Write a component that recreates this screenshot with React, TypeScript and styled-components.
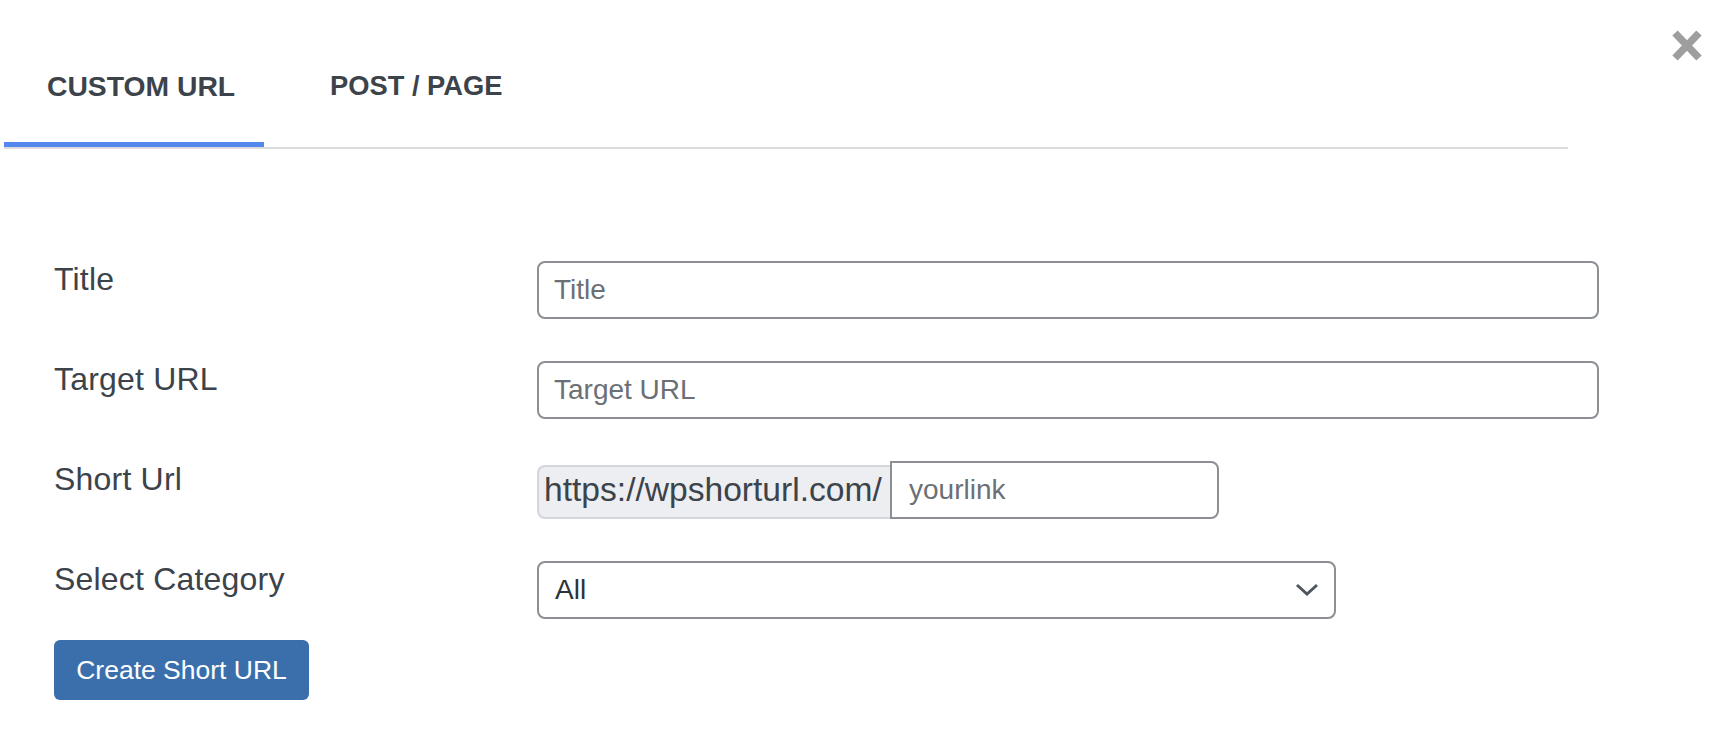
import React from "react";
import styled, { createGlobalStyle } from "styled-components";

const GlobalStyle = createGlobalStyle`
  html, body {
    margin: 0;
    padding: 0;
    background: #ffffff;
    font-family: "Liberation Sans", Arial, sans-serif;
  }
  * { box-sizing: border-box; }
`;

const Page = styled.div`
  position: relative;
  width: 1722px;
  height: 754px;
  background: #ffffff;
  overflow: hidden;
`;

const CloseButton = styled.button`
  position: absolute;
  top: 30px;
  right: 20px;
  width: 30px;
  height: 31px;
  padding: 0;
  border: 0;
  background: transparent;
  cursor: pointer;
  display: flex;
  align-items: center;
  justify-content: center;
`;

const TabBar = styled.div`
  display: flex;
  margin-left: 4px;
  width: 1564px;
  border-bottom: 2px solid #dcdcde;
`;

const Tab = styled.div<{ $active?: boolean; $width?: number; $pad: number; $size: number }>`
  width: ${(p) => (p.$width ? `${p.$width}px` : "auto")};
  padding: 69px 0 39px ${(p) => p.$pad}px;
  font-size: ${(p) => p.$size}px;
  line-height: 34px;
  font-weight: 700;
  color: #3c434a;
  white-space: nowrap;
  border-bottom: 5px solid ${(p) => (p.$active ? "#5588ee" : "transparent")};
  cursor: pointer;
`;

const Form = styled.div`
  display: flex;
  flex-direction: column;
  align-items: flex-start;
  padding: 112px 0 0 54px;
`;

const Fields = styled.div`
  display: flex;
  flex-direction: column;
  gap: 42px;
`;

const FieldRow = styled.div`
  display: grid;
  grid-template-columns: 483px 1062px;
  height: 58px;
`;

const Label = styled.label`
  padding-top: 0;
  font-size: 32px;
  line-height: 36px;
  letter-spacing: 0.2px;
  color: #3c434a;
`;

const TextInput = styled.input<{ $width?: number }>`
  width: ${(p) => (p.$width ? `${p.$width}px` : "100%")};
  height: 58px;
  padding: 0 15px;
  border: 2px solid #8c8f94;
  border-radius: 8px;
  background: #ffffff;
  font-family: "Liberation Sans", Arial, sans-serif;
  font-size: 28px;
  color: #2c3338;
  outline: none;
  &::placeholder {
    color: #6b6f76;
  }
`;

const Group = styled.div`
  display: flex;
  align-items: flex-end;
  height: 58px;
`;

const Prefix = styled.span`
  display: flex;
  align-items: center;
  width: 353px;
  height: 54px;
  padding: 0 0 4px 5px;
  background: #eceef1;
  border: 2px solid #d3d6da;
  border-right: 0;
  border-radius: 8px 0 0 8px;
  font-size: 33.6px;
  color: #3c434a;
  white-space: nowrap;
`;

const GroupInput = styled(TextInput)`
  padding: 0 17px;
  border-radius: 0 8px 8px 0;
`;

const SelectBox = styled.div`
  display: flex;
  align-items: center;
  justify-content: space-between;
  width: 799px;
  height: 58px;
  padding: 0 15px 0 16px;
  border: 2px solid #8c8f94;
  border-radius: 8px;
  font-size: 28px;
  color: #2c3338;
  cursor: pointer;
`;

const PrimaryButton = styled.button`
  margin-top: 21px;
  width: 255px;
  height: 60px;
  padding: 0;
  border: 0;
  border-radius: 6px;
  background: #3a6fab;
  color: #ffffff;
  font-family: "Liberation Sans", Arial, sans-serif;
  font-size: 26.5px;
  cursor: pointer;
`;

export default function App() {
  return (
    <>
      <GlobalStyle />
      <Page>
        <CloseButton aria-label="Close">
          <svg width="30" height="31" viewBox="0 0 30 31">
            <line x1="3" y1="3" x2="27" y2="28" stroke="#9e9e9e" strokeWidth="7.5" />
            <line x1="27" y1="3" x2="3" y2="28" stroke="#9e9e9e" strokeWidth="7.5" />
          </svg>
        </CloseButton>

        <TabBar>
          <Tab $active $width={260} $pad={43} $size={28.3}>CUSTOM URL</Tab>
          <Tab $pad={66} $size={27.3}>POST / PAGE</Tab>
        </TabBar>

        <Form>
          <Fields>
            <FieldRow>
              <Label>Title</Label>
              <TextInput placeholder="Title" />
            </FieldRow>
            <FieldRow>
              <Label>Target URL</Label>
              <TextInput placeholder="Target URL" />
            </FieldRow>
            <FieldRow>
              <Label>Short Url</Label>
              <Group>
                <Prefix>https://wpshorturl.com/</Prefix>
                <GroupInput $width={329} placeholder="yourlink" />
              </Group>
            </FieldRow>
            <FieldRow>
              <Label>Select Category</Label>
              <SelectBox>
                <span>All</span>
                <svg width="24" height="14" viewBox="0 0 24 14">
                  <polyline points="2,2 12,11 22,2" fill="none" stroke="#50575e" strokeWidth="3" />
                </svg>
              </SelectBox>
            </FieldRow>
          </Fields>
          <PrimaryButton>Create Short URL</PrimaryButton>
        </Form>
      </Page>
    </>
  );
}
